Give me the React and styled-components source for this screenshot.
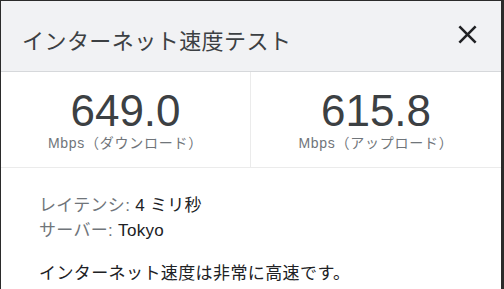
import React from "react";
import styled, { createGlobalStyle } from "styled-components";

const Global = createGlobalStyle`
  html, body { margin: 0; padding: 0; background: #2b2b2b; }
  body { font-family: "Liberation Sans", "Noto Sans CJK JP", sans-serif; }
`;

const Page = styled.div`
  padding: 1px 0 0 1px;
  height: 288px;
  overflow: hidden;
`;

const Dialog = styled.div`
  width: 500px;
  background: #ffffff;
  min-height: 300px;
`;

const Header = styled.div`
  height: 70px;
  background: #f1f2f4;
  border-bottom: 1px solid #d6d8db;
  display: flex;
  align-items: flex-start;
  justify-content: space-between;
  padding: 0 18px 0 21px;
`;

const Title = styled.h1`
  margin: 23px 0 0;
  font-family: "Noto Sans CJK JP", sans-serif;
  font-weight: 400;
  font-size: 22px;
  line-height: 30px;
  color: #3c4043;
  letter-spacing: 0.45px;
`;

const Close = styled.button`
  margin-top: 18px;
  padding: 0;
  border: 0;
  background: none;
  width: 31px;
  height: 31px;
  color: #202124;
  display: flex;
  svg { width: 31px; height: 31px; fill: currentColor; }
`;

const Stats = styled.div`
  display: grid;
  grid-template-columns: 250px 1fr;
  border-bottom: 1px solid #ebebeb;
`;

const Stat = styled.div`
  padding: 17px 0 14px;
  text-align: center;
  border-right: ${p => (p.$divider ? "1px solid #ebebeb" : "0")};
  display: flex;
  flex-direction: column;
  align-items: center;
`;

const Value = styled.div`
  font-family: "Liberation Sans", Arial, sans-serif;
  font-size: 44px;
  line-height: 44px;
  color: #3c4043;
`;

const Unit = styled.div`
  font-size: 14px;
  line-height: 20px;
  color: #70757a;
  letter-spacing: 0.75px;
`;

const Info = styled.div`
  padding: 25px 38px 0;
  font-size: 17px;
  line-height: 25px;
  letter-spacing: 0.3px;
`;

const Line = styled.div`
  color: #202124;
`;

const Label = styled.span`
  color: #70757a;
`;

const Verdict = styled.div`
  margin-top: 18px;
  color: #202124;
  font-size: 17px;
  line-height: 25px;
  letter-spacing: 0.4px;
`;

export default function App() {
  return (
    <>
      <Global />
      <Page>
        <Dialog>
          <Header>
            <Title>インターネット速度テスト</Title>
            <Close aria-label="閉じる">
              <svg viewBox="0 0 24 24">
                <path d="M19 6.41L17.59 5 12 10.59 6.41 5 5 6.41 10.59 12 5 17.59 6.41 19 12 13.41 17.59 19 19 17.59 13.41 12z" />
              </svg>
            </Close>
          </Header>
          <Stats>
            <Stat $divider>
              <Value>649.0</Value>
              <Unit>Mbps（ダウンロード）</Unit>
            </Stat>
            <Stat>
              <Value>615.8</Value>
              <Unit>Mbps（アップロード）</Unit>
            </Stat>
          </Stats>
          <Info>
            <Line><Label>レイテンシ:</Label> 4 ミリ秒</Line>
            <Line><Label>サーバー:</Label> Tokyo</Line>
            <Verdict>インターネット速度は非常に高速です。</Verdict>
          </Info>
        </Dialog>
      </Page>
    </>
  );
}
